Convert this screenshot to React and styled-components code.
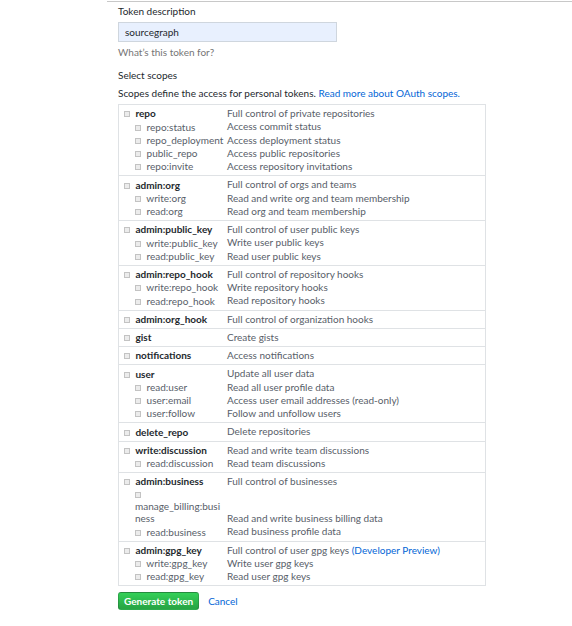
import React from "react";
import styled, { createGlobalStyle } from "styled-components";

const Global = createGlobalStyle`
  html, body { margin: 0; padding: 0; background: #fff; }
  body { font-family: "Lato", "Liberation Sans", sans-serif; font-size: 10px; color: #333; }
`;

const Page = styled.div`
  margin: 1px 0 0 107px;
  border-top: 1px solid #c8c8c8;
  padding: 2px 0 20px 11px;
`;

const Label = styled.div`
  line-height: 14px;
  color: #24292e;
`;

const Input = styled.input`
  display: block;
  box-sizing: border-box;
  margin-top: 4px;
  width: 219px;
  height: 20px;
  padding: 0 6px;
  border: 1px solid #cfd6de;
  background: #e8f0fe;
  font: inherit;
  color: #24292e;
  outline: none;
`;

const Note = styled.div`
  margin-top: ${(p) => p.$mt || 0}px;
  line-height: 14px;
  color: ${(p) => (p.$muted ? "#767676" : "#24292e")};
`;

const Link = styled.a`
  color: #0366d6;
  text-decoration: none;
`;

const Table = styled.div`
  margin-top: 4px;
  width: 368px;
  box-sizing: border-box;
  border: 1px solid #dfe2e5;
`;

const Group = styled.div`
  padding: 2px 0;
  & + & { border-top: 1px solid #dfe2e5; }
`;

const Line = styled.div`
  display: grid;
  grid-template-columns: 108px 1fr;
  align-items: end;
`;

const Name = styled.div`
  padding: 0 2px 1px ${(p) => (p.$child ? 16 : 5)}px;
  line-height: 12px;
  overflow-wrap: break-word;
  font-weight: ${(p) => (p.$child ? 400 : 700)};
  color: ${(p) => (p.$child ? "#586069" : "#24292e")};
`;

const Box = styled.span`
  display: inline-block;
  width: 4px;
  height: 4px;
  border: 1px solid #c3c3c3;
  background: #ececec;
  margin-right: 3px;
  vertical-align: 0px;
`;

const Desc = styled.div`
  line-height: 13.25px;
  color: #586069;
`;

const Actions = styled.div`
  display: flex;
  align-items: center;
  gap: 9px;
  margin-top: 6px;
`;

const Button = styled.button`
  box-sizing: border-box;
  height: 18px;
  padding: 0 5px;
  border: 1px solid rgba(27, 31, 35, 0.2);
  border-radius: 3px;
  background: linear-gradient(#34d058, #28a745 90%);
  color: #fff;
  font: inherit;
  font-weight: 700;
  line-height: 16px;
`;

const scopes = [
  [
    ["repo", "Full control of private repositories"],
    ["repo:status", "Access commit status", 1],
    ["repo_deployment", "Access deployment status", 1],
    ["public_repo", "Access public repositories", 1],
    ["repo:invite", "Access repository invitations", 1],
  ],
  [
    ["admin:org", "Full control of orgs and teams"],
    ["write:org", "Read and write org and team membership", 1],
    ["read:org", "Read org and team membership", 1],
  ],
  [
    ["admin:public_key", "Full control of user public keys"],
    ["write:public_key", "Write user public keys", 1],
    ["read:public_key", "Read user public keys", 1],
  ],
  [
    ["admin:repo_hook", "Full control of repository hooks"],
    ["write:repo_hook", "Write repository hooks", 1],
    ["read:repo_hook", "Read repository hooks", 1],
  ],
  [["admin:org_hook", "Full control of organization hooks"]],
  [["gist", "Create gists"]],
  [["notifications", "Access notifications"]],
  [
    ["user", "Update all user data"],
    ["read:user", "Read all user profile data", 1],
    ["user:email", "Access user email addresses (read-only)", 1],
    ["user:follow", "Follow and unfollow users", 1],
  ],
  [["delete_repo", "Delete repositories"]],
  [
    ["write:discussion", "Read and write team discussions"],
    ["read:discussion", "Read team discussions", 1],
  ],
  [
    ["admin:business", "Full control of businesses"],
    ["manage_billing:business", "Read and write business billing data", 1],
    ["read:business", "Read business profile data", 1],
  ],
  [
    ["admin:gpg_key", "Full control of user gpg keys", 0, true],
    ["write:gpg_key", "Write user gpg keys", 1],
    ["read:gpg_key", "Read user gpg keys", 1],
  ],
];

export default function App() {
  return (
    <>
      <Global />
      <Page>
        <Label>Token description</Label>
        <Input defaultValue="sourcegraph" />
        <Note $mt={3} $muted>What’s this token for?</Note>
        <Note $mt={9}>Select scopes</Note>
        <Note $mt={4}>
          Scopes define the access for personal tokens.{" "}
          <Link href="#">Read more about OAuth scopes.</Link>
        </Note>
        <Table>
          {scopes.map((g, i) => (
            <Group key={i}>
              {g.map(([name, desc, child, preview]) => (
                <Line key={name}>
                  <Name $child={!!child}>
                    <Box /> {name}
                  </Name>
                  <Desc>
                    {desc}
                    {preview && (
                      <>
                        {" "}
                        <Link href="#">(Developer Preview)</Link>
                      </>
                    )}
                  </Desc>
                </Line>
              ))}
            </Group>
          ))}
        </Table>
        <Actions>
          <Button>Generate token</Button>
          <Link href="#">Cancel</Link>
        </Actions>
      </Page>
    </>
  );
}
